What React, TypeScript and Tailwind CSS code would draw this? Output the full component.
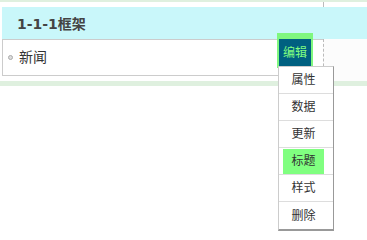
import React from "react";

const menuItems = ["属性", "数据", "更新", "标题", "样式", "删除"];

export default function App() {
  return (
    <div
      className="relative w-[367px] h-[237px] bg-white overflow-hidden"
      style={{ fontFamily: '"Liberation Sans", "Noto Sans CJK SC", sans-serif' }}
    >
      {/* frame */}
      <div className="border-t-2 border-b-[5px] border-[#dff0df]">
        <div className="flex h-[5px]">
          <div className="w-[323px]" />
          <div className="flex-1 border-l border-dashed border-[#bbb]" />
        </div>
        <div
          className="ml-[2px] h-[32px] bg-[#c9f7fa] flex items-center pl-[15px] pt-[2px] text-[14px] font-bold text-[#444]"
          style={{ fontFamily: '"DejaVu Sans", "Noto Sans CJK SC", sans-serif' }}
        >
          1-1-1框架
        </div>
        <div className="flex h-[42px]">
          <div className="w-[323px] pl-[2px] pb-[5px]">
            <div className="h-[37px] border border-r-0 border-[#ccc] flex items-center pl-[5px] gap-[6px]">
              <span className="w-[5px] h-[5px] rounded-full bg-[#ddd] border border-[#aaa]" />
              <span className="text-[14px] text-[#333]">新闻</span>
            </div>
          </div>
          <div className="flex-1 border-l border-dashed border-[#bbb] bg-[#fcfcfc]" />
        </div>
      </div>

      {/* edit button */}
      <div className="absolute left-[277px] top-[33px] w-[36px] h-[35px] bg-[#7ff77f] pt-[6px] px-[2px] pb-[2px]">
        <div className="h-full bg-[#006080] flex items-center justify-center text-[12px] text-[#80ff80]">
          编辑
        </div>
      </div>

      {/* dropdown menu */}
      <div className="absolute left-[278px] top-[66px] w-[56px] bg-white border border-[#ccc] border-r-[#999] border-b-[#999] border-b-2">
        {menuItems.map((m, i) => (
          <div
            key={m}
            className={`h-[27px] pl-[4px] flex items-center ${i < menuItems.length - 1 ? "border-b border-[#ddd]" : ""}`}
          >
            <div
              className={`w-[41px] h-[25px] flex items-center justify-center text-[12px] text-[#333] ${m === "标题" ? "bg-[#80ff80]" : ""}`}
            >
              {m}
            </div>
          </div>
        ))}
      </div>
    </div>
  );
}
